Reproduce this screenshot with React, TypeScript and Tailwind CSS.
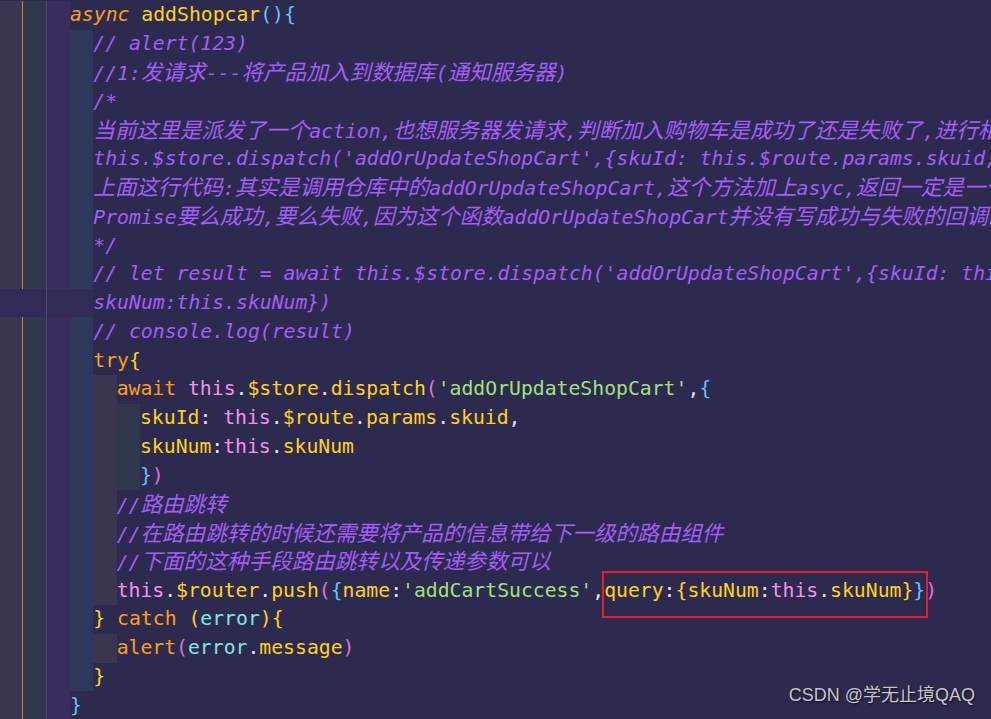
import React from "react";

type Tok = [string, string];

const COL: Record<string, string> = {
  c: "text-[#a25ef5] italic",
  k: "text-[#ff9d1a]",
  ki: "text-[#ff9d1a] italic",
  y: "text-[#ffd21a]",
  p: "text-[#f592e6]",
  w: "text-[#e4e4ee]",
  b: "text-[#62c4f4]",
  m: "text-[#e270d2]",
  g: "text-[#a3e07a]",
  cy: "text-[#82e6e6]",
};

const CJK = /([\u2E80-\u9FFF\uF900-\uFAFF\uFF00-\uFFEF]+)/;

function renderText(s: string) {
  return s.split(CJK).map((part, i) =>
    i % 2 === 1 ? (
      <span key={i} className="text-[21.6px] font-['Noto_Sans_CJK_SC',sans-serif]">
        {part}
      </span>
    ) : (
      <React.Fragment key={i}>{part}</React.Fragment>
    )
  );
}

const CELL_BG = ["bg-[#3a3652]", "bg-[#30374f]", "bg-[#3b2c5e]", "bg-[#2e385c]"];

function Cell({ level }: { level: number }) {
  const bg = CELL_BG[level % 4];
  let extra = "";
  if (level === 0) extra = "border-r border-[#a8922c]";
  if (level === 1) extra = "border-r border-[#4a4c6c]";
  return <div className={`w-[23.33px] h-full shrink-0 ${bg} ${extra}`} />;
}

type Line = { indent: number; toks: Tok[]; wrapped?: boolean };

const lines: Line[] = [
  { indent: 3, toks: [["ki", "async"], ["w", " "], ["y", "addShopcar"], ["b", "(){"]] },
  { indent: 4, toks: [["c", "// alert(123)"]] },
  { indent: 4, toks: [["c", "//1:发请求---将产品加入到数据库(通知服务器)"]] },
  { indent: 4, toks: [["c", "/*"]] },
  {
    indent: 4,
    toks: [["c", "当前这里是派发了一个action,也想服务器发请求,判断加入购物车是成功了还是失败了,进行相应的处理"]],
  },
  {
    indent: 4,
    toks: [["c", "this.$store.dispatch('addOrUpdateShopCart',{skuId: this.$route.params.skuid,skuNum:this.skuNum})"]],
  },
  {
    indent: 4,
    toks: [["c", "上面这行代码:其实是调用仓库中的addOrUpdateShopCart,这个方法加上asyc,返回一定是一个Promise"]],
  },
  {
    indent: 4,
    toks: [["c", "Promise要么成功,要么失败,因为这个函数addOrUpdateShopCart并没有写成功与失败的回调函数"]],
  },
  { indent: 4, toks: [["c", "*/"]] },
  {
    indent: 4,
    toks: [["c", "// let result = await this.$store.dispatch('addOrUpdateShopCart',{skuId: this.$route.params.skuid,"]],
  },
  { indent: 4, wrapped: true, toks: [["c", "skuNum:this.skuNum})"]] },
  { indent: 4, toks: [["c", "// console.log(result)"]] },
  { indent: 4, toks: [["k", "try"], ["y", "{"]] },
  {
    indent: 5,
    toks: [
      ["k", "await"],
      ["w", " "],
      ["p", "this"],
      ["w", "."],
      ["y", "$store"],
      ["w", "."],
      ["y", "dispatch"],
      ["m", "("],
      ["g", "'addOrUpdateShopCart'"],
      ["w", ","],
      ["b", "{"],
    ],
  },
  {
    indent: 6,
    toks: [
      ["y", "skuId"],
      ["w", ": "],
      ["p", "this"],
      ["w", "."],
      ["y", "$route"],
      ["w", "."],
      ["y", "params"],
      ["w", "."],
      ["y", "skuid"],
      ["w", ","],
    ],
  },
  {
    indent: 6,
    toks: [
      ["y", "skuNum"],
      ["w", ":"],
      ["p", "this"],
      ["w", "."],
      ["y", "skuNum"],
    ],
  },
  { indent: 6, toks: [["b", "}"], ["m", ")"]] },
  { indent: 5, toks: [["c", "//路由跳转"]] },
  { indent: 5, toks: [["c", "//在路由跳转的时候还需要将产品的信息带给下一级的路由组件"]] },
  { indent: 5, toks: [["c", "//下面的这种手段路由跳转以及传递参数可以"]] },
  {
    indent: 5,
    toks: [
      ["p", "this"],
      ["w", "."],
      ["y", "$router"],
      ["w", "."],
      ["y", "push"],
      ["m", "("],
      ["b", "{"],
      ["y", "name"],
      ["w", ":"],
      ["g", "'addCartSuccess'"],
      ["w", ","],
      ["y", "query"],
      ["w", ":"],
      ["y", "{"],
      ["y", "skuNum"],
      ["w", ":"],
      ["p", "this"],
      ["w", "."],
      ["y", "skuNum"],
      ["y", "}"],
      ["b", "}"],
      ["m", ")"],
    ],
  },
  {
    indent: 4,
    toks: [
      ["y", "}"],
      ["w", " "],
      ["k", "catch"],
      ["w", " "],
      ["y", "("],
      ["cy", "error"],
      ["y", "){"],
    ],
  },
  {
    indent: 5,
    toks: [
      ["k", "alert"],
      ["m", "("],
      ["cy", "error"],
      ["w", "."],
      ["y", "message"],
      ["m", ")"],
    ],
  },
  { indent: 4, toks: [["y", "}"]] },
  { indent: 3, toks: [["b", "}"]] },
];

function Row({ line }: { line: Line }) {
  return (
    <div className="flex h-[28.78px] items-center">
      {line.wrapped ? (
        <div className="flex h-full w-[93.33px] shrink-0 bg-[#312c57]">
          <div className="h-full w-[46.66px] border-r border-[#4a4c6c]" />
        </div>
      ) : (
        <div className="flex h-full shrink-0">
          {Array.from({ length: line.indent }).map((_, i) => (
            <Cell key={i} level={i} />
          ))}
        </div>
      )}
      <div className="whitespace-pre leading-[28px]">
        {line.toks.map(([t, s], i) => (
          <span key={i} className={COL[t]}>
            {renderText(s)}
          </span>
        ))}
      </div>
    </div>
  );
}

export default function App() {
  return (
    <div className="relative h-[719px] w-[991px] overflow-hidden bg-[#2d2a50] font-['DejaVu_Sans_Mono',monospace] text-[19.75px]">
      <div className="flex flex-col pt-[1px]">
        {lines.map((l, i) => (
          <Row key={i} line={l} />
        ))}
      </div>
      <div className="pointer-events-none absolute left-[602px] top-[571px] h-[47px] w-[326px] border-2 border-[#e3202a]" />
      <div className="absolute bottom-[10px] right-[16px] font-['Liberation_Sans','Noto_Sans_CJK_SC',sans-serif] text-[18px] text-[#c6c6c8] [text-shadow:1px_1px_2px_rgba(0,0,0,0.7)]">
        CSDN @学无止境QAQ
      </div>
    </div>
  );
}
